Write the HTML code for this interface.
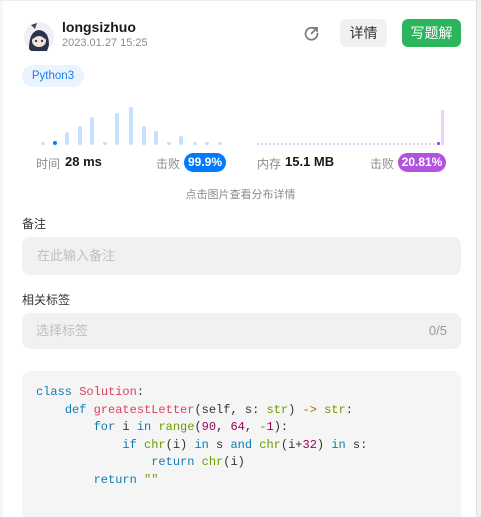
<!DOCTYPE html>
<html><head><meta charset="utf-8"><style>
*{margin:0;padding:0;box-sizing:border-box}
html,body{width:481px;height:517px;overflow:hidden}
body{background:#fff;font-family:"Liberation Sans","Noto Sans CJK SC",sans-serif;position:relative;color:#262626}
.a{position:absolute}
.bar{position:absolute;width:4px;background:#c6e1ff;border-radius:2px;top:auto}
.code{font-family:"Liberation Mono","DejaVu Sans Mono",monospace;font-size:12px;line-height:17.6px;white-space:pre;color:#333}
.k{color:#0e7db4}.f{color:#e03e62}.b{color:#6b9a00}.n{color:#99005c}.o{color:#a36b00}
</style></head><body>
<div class="a" style="left:0;top:0;width:3px;height:517px;background:#f5f6f8"></div>
<div class="a" style="left:476px;top:0;width:5px;height:517px;background:#f0f0f0;border-left:1px solid #e2e2e2"></div>
<div class="a" style="left:0;top:0;width:481px;height:1px;background:#eee"></div>
<svg class="a" style="left:23px;top:21px" width="32" height="32" viewBox="0 0 32 32"><circle cx="16" cy="16" r="15" fill="#eef0f3"/><path d="M6 28 Q6 10 16 9 Q26 10 26 24 L24 30 L8 30Z" fill="#2c3350"/><ellipse cx="16" cy="20" rx="7" ry="6" fill="#f4e2d8"/><path d="M9 16 Q16 8 23 16 L22 18 Q16 12 10 18Z" fill="#2c3350"/><circle cx="13" cy="20" r="1.2" fill="#345"/><circle cx="19" cy="20" r="1.2" fill="#345"/><path d="M8 4 L14 2 L12 8Z" fill="#445"/></svg>
<div class="a" style="left:62px;top:19px;font-size:14px;font-weight:bold;color:#1a1a1a">longsizhuo</div>
<div class="a" style="left:62px;top:37px;font-size:11px;color:#8c8c8c">2023.01.27 15:25</div>
<svg class="a" style="left:303px;top:25px" width="17" height="17" viewBox="0 0 17 17" fill="none" stroke="#7a7a7a" stroke-width="1.7" stroke-linecap="round"><path d="M14.5 8.5 A6 6 0 1 1 11 3.3"/><path d="M8.5 8.5 L14 3"/><path d="M10.5 2.8 L14 2.8 L14 6.3"/></svg>
<div class="a" style="left:340px;top:19px;width:47px;height:28px;background:#f0f1f3;border-radius:6px;font-size:14px;line-height:28px;text-align:center;color:#333">详情</div>
<div class="a" style="left:402px;top:19px;width:59px;height:28px;background:#2db55d;border-radius:6px;font-size:14px;line-height:28px;text-align:center;color:#fff">写题解</div>
<div class="a" style="left:22px;top:65px;width:62px;height:22px;background:#eaf4ff;border-radius:11px;font-size:11.5px;line-height:22px;text-align:center;color:#1e7cf0">Python3</div>
<div style="position:absolute;left:0;top:0;width:481px;height:145px">
<div class="bar" style="left:41px;bottom:0;height:3px"></div>
<div class="bar" style="left:53px;bottom:0;height:4px;background:#0a7cff"></div>
<div class="bar" style="left:65px;bottom:0;height:13px"></div>
<div class="bar" style="left:78px;bottom:0;height:19px"></div>
<div class="bar" style="left:90px;bottom:0;height:28px"></div>
<div class="bar" style="left:103px;bottom:0;height:3px"></div>
<div class="bar" style="left:115px;bottom:0;height:32px"></div>
<div class="bar" style="left:129px;bottom:0;height:38px"></div>
<div class="bar" style="left:142px;bottom:0;height:19px"></div>
<div class="bar" style="left:154px;bottom:0;height:14px"></div>
<div class="bar" style="left:167px;bottom:0;height:3px"></div>
<div class="bar" style="left:179px;bottom:0;height:9px"></div>
<div class="bar" style="left:193px;bottom:0;height:3px"></div>
<div class="bar" style="left:205px;bottom:0;height:3px"></div>
<div class="bar" style="left:218px;bottom:0;height:3px"></div>
</div>
<div class="a" style="left:257px;top:143px;width:182px;height:2px;background:repeating-linear-gradient(90deg,#e8d0f6 0 2px,transparent 2px 4px)"></div>
<div class="a" style="left:437px;top:142px;width:3px;height:3px;background:#a04ad6;border-radius:1px"></div>
<div class="a" style="left:441px;top:110px;width:3px;height:35px;background:#ead2fa"></div>
<div class="a" style="left:36px;top:155px;font-size:12px;color:#8c8c8c">时间</div>
<div class="a" style="left:65px;top:154px;font-size:13px;font-weight:bold;color:#1a1a1a">28 ms</div>
<div class="a" style="left:156px;top:155px;font-size:12px;color:#8c8c8c">击败</div>
<div class="a" style="left:184px;top:153px;width:42px;height:19px;background:#007aff;border-radius:10px;color:#fff;font-size:12px;font-weight:bold;line-height:19px;text-align:center">99.9%</div>
<div class="a" style="left:257px;top:155px;font-size:12px;color:#8c8c8c">内存</div>
<div class="a" style="left:285px;top:154px;font-size:13px;font-weight:bold;color:#1a1a1a">15.1 MB</div>
<div class="a" style="left:370px;top:155px;font-size:12px;color:#8c8c8c">击败</div>
<div class="a" style="left:398px;top:153px;width:48px;height:19px;background:#b452e0;border-radius:10px;color:#fff;font-size:12px;font-weight:bold;line-height:19px;text-align:center">20.81%</div>
<div class="a" style="left:0;width:481px;top:186px;text-align:center;font-size:11px;color:#8c8c8c">点击图片查看分布详情</div>
<div class="a" style="left:22px;top:215px;font-size:12px;color:#333">备注</div>
<div class="a" style="left:22px;top:237px;width:439px;height:38px;background:#f0f1f3;border-radius:8px;font-size:13px;line-height:38px;padding-left:15px;color:#bfbfbf">在此输入备注</div>
<div class="a" style="left:22px;top:291px;font-size:12px;color:#333">相关标签</div>
<div class="a" style="left:22px;top:313px;width:439px;height:36px;background:#f0f1f3;border-radius:8px;font-size:13px;line-height:36px;padding-left:14px;color:#bfbfbf">选择标签<span style="position:absolute;right:14px;color:#999">0/5</span></div>
<div class="a" style="left:22px;top:371px;width:439px;height:146px;background:#f5f5f5;border-radius:8px 8px 0 0"></div>
<div class="a code" style="left:36px;top:384px"><span class="k">class</span> <span class="f">Solution</span>:
    <span class="k">def</span> <span class="f">greatestLetter</span>(self, s: <span class="b">str</span>) <span class="o">-&gt;</span> <span class="b">str</span>:
        <span class="k">for</span> i <span class="k">in</span> <span class="b">range</span>(<span class="n">90</span>, <span class="n">64</span>, <span class="o">-</span><span class="n">1</span>):
            <span class="k">if</span> <span class="b">chr</span>(i) <span class="k">in</span> s <span class="k">and</span> <span class="b">chr</span>(i+<span class="n">32</span>) <span class="k">in</span> s:
                <span class="k">return</span> <span class="b">chr</span>(i)
        <span class="k">return</span> <span class="b">""</span></div>
</body></html>
